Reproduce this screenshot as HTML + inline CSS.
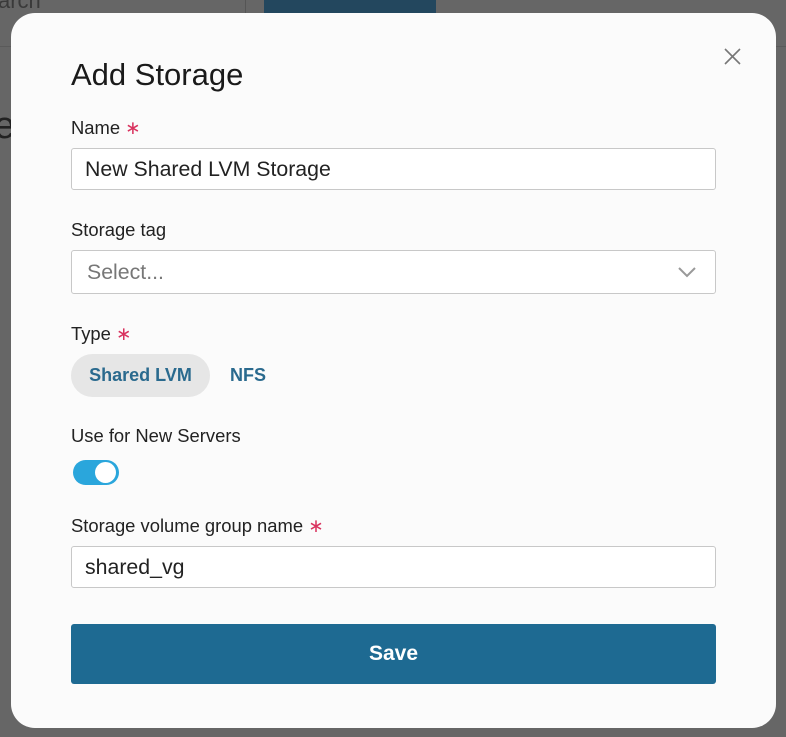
<!DOCTYPE html>
<html><head><style>
body{margin:0;width:786px;height:737px;background:#666;font-family:"Liberation Sans",sans-serif;position:relative;overflow:hidden}
.bg{position:absolute;color:#333;font-size:22px}
.modal{position:absolute;left:11px;top:13px;width:765px;height:715px;background:#fbfbfb;border-radius:24px}
.a{position:absolute}
.lbl{position:absolute;left:60px;font-size:18.4px;color:#222}
.req{color:#d9325e}
.inp{position:absolute;left:60px;width:645px;border:1px solid #c8c8c8;border-radius:3px;background:#fff;font-size:21.3px;color:#222;box-sizing:border-box;padding-left:13px}
</style></head><body>
<div class="bg" style="left:-2px;top:-12px;color:#3a3a3a">arch</div>
<div class="a" style="left:245px;top:0;width:1px;height:13px;background:#555"></div>
<div class="a" style="left:264px;top:0;width:172px;height:13px;background:#23475e"></div>
<div class="a" style="left:0;top:46px;width:786px;height:1px;background:#5a5a5a"></div>
<div class="bg" style="left:-6px;top:105px;font-size:38px;color:#222">e</div>
<div class="modal">
<div class="a" style="left:60px;top:44px;font-size:31px;color:#1a1a1a">Add Storage</div>
<svg class="a" style="left:713px;top:35px" width="17" height="17"><path d="M1 1L16 16M16 1L1 16" stroke="#777" stroke-width="1.6"/></svg>
<div class="lbl" style="top:104px">Name <span class="req">∗</span></div>
<div class="inp" style="top:135px;height:42px;line-height:40px">New Shared LVM Storage</div>
<div class="lbl" style="top:206px">Storage tag</div>
<div class="inp" style="top:237px;height:44px;line-height:42px;color:#777;padding-left:15px">Select...</div>
<svg class="a" style="left:667px;top:254px" width="18" height="11"><path d="M1 1L9 9L17 1" fill="none" stroke="#999" stroke-width="2"/></svg>
<div class="lbl" style="top:310px">Type <span class="req">∗</span></div>
<div class="a" style="left:60px;top:341px;width:139px;height:43px;border-radius:22px;background:#e6e6e6;color:#2a6a8e;font-size:18px;font-weight:bold;line-height:43px;text-align:center">Shared LVM</div>
<div class="a" style="left:219px;top:341px;line-height:43px;color:#2a6a8e;font-size:18px;font-weight:bold">NFS</div>
<div class="lbl" style="top:412px">Use for New Servers</div>
<div class="a" style="left:62px;top:447px;width:46px;height:25px;border-radius:13px;background:#2aa6dc"></div>
<div class="a" style="left:84px;top:449px;width:21px;height:21px;border-radius:50%;background:#fff"></div>
<div class="lbl" style="top:502px">Storage volume group name <span class="req">∗</span></div>
<div class="inp" style="top:533px;height:42px;line-height:40px">shared_vg</div>
<div class="a" style="left:60px;top:611px;width:645px;height:60px;border-radius:3px;background:#1e6a92;color:#fff;font-size:21px;font-weight:bold;line-height:60px;text-align:center">Save</div>
</div>
</body></html>
